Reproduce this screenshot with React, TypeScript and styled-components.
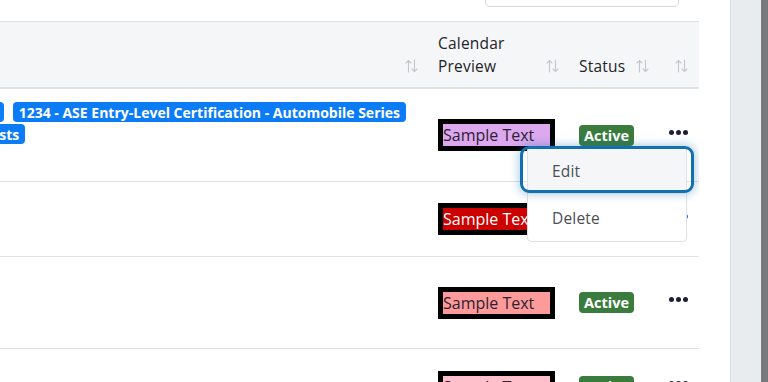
import React from 'react';
import styled, { createGlobalStyle } from 'styled-components';

const GlobalStyle = createGlobalStyle`
  html, body {
    margin: 0;
    padding: 0;
    height: 382px;
    overflow: hidden;
    background: #ffffff;
  }
  body {
    font-family: "Open Sans", "Liberation Sans", sans-serif;
    color: #212529;
  }
`;

const SCROLL_X = 160;

const Page = styled.div`
  display: flex;
  width: 768px;
  height: 382px;
  overflow: hidden;
`;

const Main = styled.main`
  flex: 1;
  min-width: 0;
  padding-right: 31px;
  background: #ffffff;
`;

const SidePanel = styled.aside`
  width: 30px;
  border-left: 1px solid #d9dce0;
  background: #e9ecef;
`;

const ScrollThumb = styled.div`
  width: 7px;
  background: #77787b;
`;

const Toolbar = styled.div`
  display: flex;
  justify-content: flex-end;
  padding-right: 20px;
  margin-bottom: 14px;
`;

const SearchInput = styled.div`
  width: 194px;
  height: 38px;
  margin-top: -31px;
  border: 1px solid #d3d7dc;
  border-radius: 5px;
  box-sizing: border-box;
  background: #fff;
`;

const ScrollArea = styled.div`
  overflow: hidden;
`;

const Table = styled.div`
  display: grid;
  grid-template-columns: ${430 + SCROLL_X}px 141px 90px 38px;
  margin-left: -${SCROLL_X}px;
  position: relative;
`;

const HeaderCell = styled.div`
  display: flex;
  align-items: flex-end;
  justify-content: space-between;
  gap: 6px;
  padding: 10px 12px 9px 8px;
  background: #f5f6f8;
  border-top: 1px solid #dee2e6;
  border-bottom: 2px solid #dee2e6;
  font-size: 15.5px;
  font-weight: 500;
  letter-spacing: 0.2px;
  line-height: 23px;
  color: #1f2328;
`;

const SortIcon = styled.svg`
  flex: none;
  width: 13px;
  height: 14px;
  margin-bottom: 5px;
`;

const Cell = styled.div<{ $h: number }>`
  position: relative;
  display: flex;
  align-items: center;
  height: ${p => p.$h}px;
  box-sizing: border-box;
  padding: 0 8px;
  border-bottom: 1px solid #dee2e6;
`;

const TagCell = styled(Cell)`
  flex-direction: column;
  align-items: stretch;
  gap: 2px;
  padding: 13px 24px 0 8px;
  overflow: hidden;
`;

const TagLine = styled.div<{ $end?: boolean }>`
  display: flex;
  gap: 9px;
  justify-content: ${p => (p.$end ? 'flex-end' : 'flex-start')};
  white-space: nowrap;
`;

const Tag = styled.span`
  display: inline-flex;
  align-items: center;
  height: 20px;
  padding: 0 6px;
  border-radius: 4px;
  background: #0b7cf5;
  color: #fff;
  font-size: 14px;
  font-weight: 700;
`;

const Preview = styled.div<{ $bg: string; $fg: string }>`
  width: 117px;
  height: 32px;
  box-sizing: border-box;
  border: 5px solid #000;
  background: ${p => p.$bg};
  color: ${p => p.$fg};
  font-size: 16px;
  line-height: 22px;
  white-space: nowrap;
  overflow: hidden;
`;

const StatusBadge = styled.span`
  display: inline-flex;
  align-items: center;
  height: 21px;
  padding: 0 5px;
  border-radius: 4px;
  background: #3a7b3e;
  color: #fff;
  font-size: 14.5px;
  font-weight: 700;
`;

const DotsButton = styled.button<{ $color: string }>`
  display: flex;
  gap: 2px;
  padding: 0;
  margin-top: -6px;
  border: 0;
  background: none;
  color: ${p => p.$color};
  & span {
    width: 5px;
    height: 5px;
    border-radius: 50%;
    background: currentColor;
  }
`;

const Menu = styled.div`
  position: absolute;
  top: 57px;
  right: 12px;
  z-index: 2;
  width: 160px;
  box-sizing: border-box;
  border: 1px solid #dee2e6;
  border-radius: 4px;
  background: #fff;
`;

const MenuItem = styled.div<{ $focused?: boolean }>`
  position: relative;
  height: 47px;
  display: flex;
  align-items: center;
  padding-left: 24px;
  font-size: 15.5px;
  letter-spacing: 0.2px;
  color: #4a4e55;
  background: ${p => (p.$focused ? '#f5f6f8' : 'transparent')};

  ${p =>
    p.$focused &&
    `
    &::after {
      content: '';
      position: absolute;
      top: -1px;
      bottom: 1px;
      left: -8px;
      right: -8px;
      border: 3px solid #1270b2;
      border-radius: 9px;
      box-shadow: 0 0 9px 2px rgba(18, 112, 178, 0.3);
    }
  `}
`;

function Sort() {
  return (
    <SortIcon viewBox="0 0 13 14" fill="none" stroke="#c3c7cc" strokeWidth="1.1" strokeLinecap="round">
      <path d="M3.5 13V1.5M1 4l2.5-2.5L6 4" />
      <path d="M9.5 1v11.5M7 10l2.5 2.5L12 10" />
    </SortIcon>
  );
}

function Dots({ color = '#1b1f3b' }: { color?: string }) {
  return (
    <DotsButton $color={color} aria-label="Actions">
      <span />
      <span />
      <span />
    </DotsButton>
  );
}

const rows = [
  { h: 93, bg: '#dda8ee', fg: '#2a2233', tags: true, dots: '#1b1f3b', menu: true },
  { h: 75, bg: '#cc0000', fg: '#ffffff', tags: false, dots: '#1a73e8', menu: false },
  { h: 92, bg: '#ff9a9a', fg: '#2a2233', tags: false, dots: '#1b1f3b', menu: false },
  { h: 76, bg: '#ffc0cb', fg: '#2a2233', tags: false, dots: '#1b1f3b', menu: false },
];

export default function App() {
  return (
    <>
      <GlobalStyle />
      <Page>
        <Main>
          <Toolbar>
            <SearchInput />
          </Toolbar>
          <ScrollArea>
            <Table>
              <HeaderCell>
                <span>Programs</span>
                <Sort />
              </HeaderCell>
              <HeaderCell>
                <span>Calendar<br />Preview</span>
                <Sort />
              </HeaderCell>
              <HeaderCell>
                <span>Status</span>
                <Sort />
              </HeaderCell>
              <HeaderCell>
                <span />
                <Sort />
              </HeaderCell>

              {rows.map((r, i) => (
                <React.Fragment key={i}>
                  {r.tags ? (
                    <TagCell $h={r.h}>
                      <TagLine $end>
                        <Tag>Automotive Certification</Tag>
                        <Tag>1234 - ASE Entry-Level Certification - Automobile Series</Tag>
                      </TagLine>
                      <TagLine>
                        <Tag>A1 - Engine Repair Tests</Tag>
                      </TagLine>
                    </TagCell>
                  ) : (
                    <Cell $h={r.h} />
                  )}
                  <Cell $h={r.h}>
                    <Preview $bg={r.bg} $fg={r.fg}>Sample Text</Preview>
                  </Cell>
                  <Cell $h={r.h}>
                    <StatusBadge>Active</StatusBadge>
                  </Cell>
                  <Cell $h={r.h}>
                    <Dots color={r.dots} />
                    {r.menu && (
                      <Menu role="menu">
                        <MenuItem $focused>Edit</MenuItem>
                        <MenuItem>Delete</MenuItem>
                      </Menu>
                    )}
                  </Cell>
                </React.Fragment>
              ))}
            </Table>
          </ScrollArea>
        </Main>
        <SidePanel />
        <ScrollThumb />
      </Page>
    </>
  );
}
